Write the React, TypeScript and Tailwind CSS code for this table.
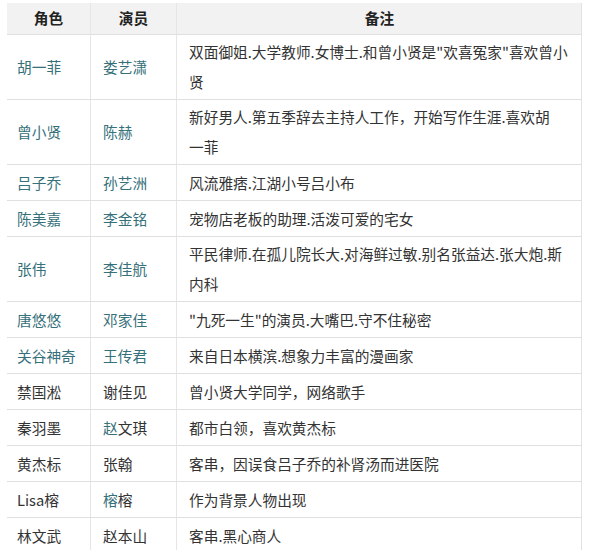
import React from "react";

type Row = {
  role: React.ReactNode;
  actor: React.ReactNode;
  note: React.ReactNode;
  tall?: boolean;
};

const T = ({ children }: { children: React.ReactNode }) => (
  <span className="text-[#36707a]">{children}</span>
);

const rows: Row[] = [
  {
    role: <T>胡一菲</T>,
    actor: <T>娄艺潇</T>,
    note: (
      <>
        双面御姐.大学教师.女博士.和曾小贤是"欢喜冤家"喜欢曾小
        <br />贤
      </>
    ),
    tall: true,
  },
  {
    role: <T>曾小贤</T>,
    actor: <T>陈赫</T>,
    note: (
      <>
        新好男人.第五季辞去主持人工作，开始写作生涯.喜欢胡
        <br />一菲
      </>
    ),
    tall: true,
  },
  { role: <T>吕子乔</T>, actor: <T>孙艺洲</T>, note: "风流雅痞.江湖小号吕小布" },
  { role: <T>陈美嘉</T>, actor: <T>李金铭</T>, note: "宠物店老板的助理.活泼可爱的宅女" },
  {
    role: <T>张伟</T>,
    actor: <T>李佳航</T>,
    note: (
      <>
        平民律师.在孤儿院长大.对海鲜过敏.别名张益达.张大炮.斯
        <br />内科
      </>
    ),
    tall: true,
  },
  { role: <T>唐悠悠</T>, actor: <T>邓家佳</T>, note: '"九死一生"的演员.大嘴巴.守不住秘密' },
  { role: <T>关谷神奇</T>, actor: <T>王传君</T>, note: "来自日本横滨.想象力丰富的漫画家" },
  { role: "禁国淞", actor: "谢佳见", note: "曾小贤大学同学，网络歌手" },
  {
    role: "秦羽墨",
    actor: (
      <>
        <T>赵</T>文琪
      </>
    ),
    note: "都市白领，喜欢黄杰标",
  },
  { role: "黄杰标", actor: "张翰", note: "客串，因误食吕子乔的补肾汤而进医院" },
  {
    role: "Lisa榕",
    actor: (
      <>
        <T>榕</T>榕
      </>
    ),
    note: "作为背景人物出现",
  },
  { role: "林文武", actor: "赵本山", note: "客串.黑心商人" },
];

export default function App() {
  return (
    <div
      className="w-[600px] h-[550px] overflow-hidden bg-white pt-[3px] pl-[7px]"
      style={{ fontFamily: '"Noto Sans CJK SC", "Noto Sans", sans-serif' }}
    >
      <div className="w-[575px] text-[14.7px] text-[#333] border-r border-[#e2e2e2]">
        <div className="grid grid-cols-[84px_86px_405px] h-[32px] bg-[#f2f2f2] border-b border-[#e0e0e0] font-bold text-[#222]">
          <div className="flex items-center justify-center border-r border-[#e6e6e6]">角色</div>
          <div className="flex items-center justify-center border-r border-[#e6e6e6]">演员</div>
          <div className="flex items-center justify-center">备注</div>
        </div>
        {rows.map((r, i) => (
          <div
            key={i}
            className={`grid grid-cols-[84px_86px_405px] border-b border-[#e0e0e0] leading-[30px] ${
              r.tall ? "h-[65px]" : "h-[36px]"
            }`}
          >
            <div className="flex items-center pl-[10px] border-r border-[#e6e6e6]">
              <span>{r.role}</span>
            </div>
            <div className="flex items-center pl-[12px] border-r border-[#e6e6e6]">
              <span>{r.actor}</span>
            </div>
            <div className="flex items-center pl-[12px] whitespace-nowrap">
              <span>{r.note}</span>
            </div>
          </div>
        ))}
      </div>
    </div>
  );
}
